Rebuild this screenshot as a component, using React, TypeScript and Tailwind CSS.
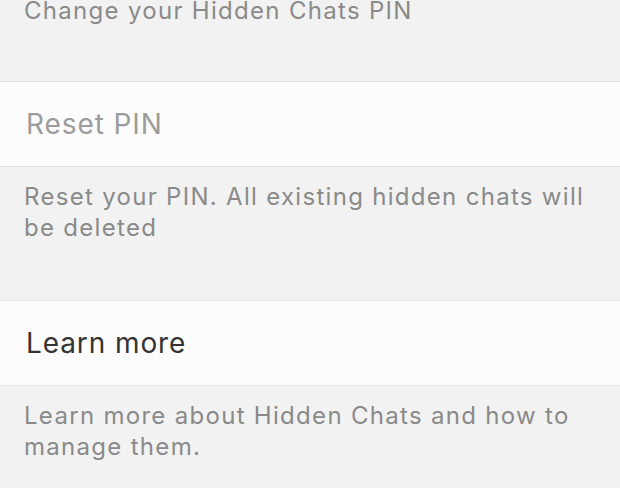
import React from "react";

function Row({ label, muted }: { label: string; muted?: boolean }) {
  return (
    <div className="flex h-[86px] items-center border-y border-[#e3e3e3] bg-[#fcfcfc] px-[26px]">
      <span
        className={`text-[28px] leading-[34px] tracking-[0.9px] ${muted ? "text-[#9c9c9c]" : "text-[#343434]"}`}
      >
        {label}
      </span>
    </div>
  );
}

function Note({ text, className }: { text: string; className?: string }) {
  return (
    <div
      className={`bg-[#f2f2f2] pl-[24px] pr-[24px] pt-[14px] text-[24px] leading-[31px] tracking-[1.3px] text-[#8a8a8a] ${className || ""}`}
    >
      {text}
    </div>
  );
}

export default function App() {
  return (
    <div
      className="h-[488px] w-[620px] overflow-hidden bg-[#f2f2f2]"
      style={{ fontFamily: "Inter, 'Noto Sans', sans-serif" }}
    >
      {/* previous note, scrolled partly out of view */}
      <Note text="Change your Hidden Chats PIN" className="-mt-[19px] h-[100px]" />
      <Row label="Reset PIN" muted />
      <Note text="Reset your PIN. All existing hidden chats will be deleted" className="h-[133px]" />
      <Row label="Learn more" />
      <Note text="Learn more about Hidden Chats and how to manage them." />
    </div>
  );
}
